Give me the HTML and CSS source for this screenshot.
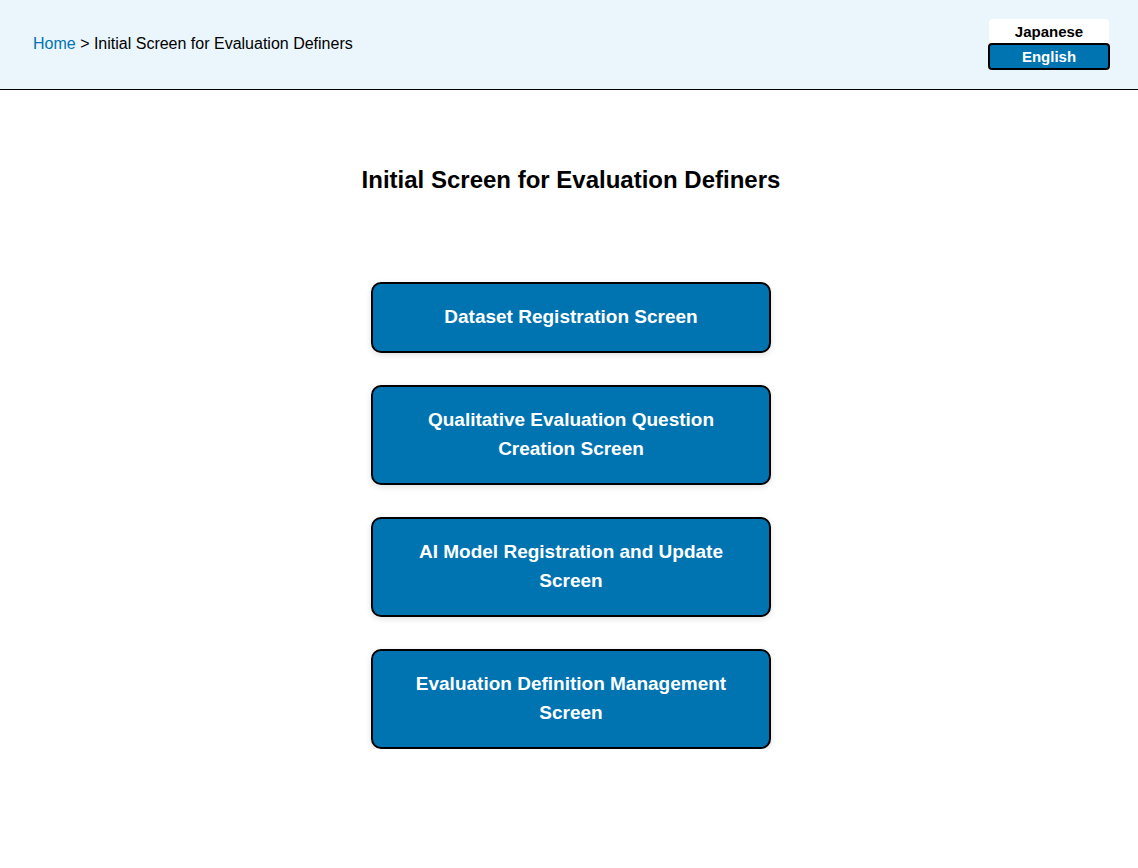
FILE: index.html
```html
<!DOCTYPE html>
<html lang="en">
<head>
<meta charset="utf-8">
<title>Initial Screen for Evaluation Definers</title>
<link rel="stylesheet" href="styles.css">
</head>
<body>
<header class="header">
  <nav class="breadcrumb"><a class="crumb-link" href="#">Home</a> &gt; Initial Screen for Evaluation Definers</nav>
  <div class="lang-switch">
    <button class="lang-btn">Japanese</button>
    <button class="lang-btn active">English</button>
  </div>
</header>
<main class="main">
  <h1 class="title">Initial Screen for Evaluation Definers</h1>
  <div class="menu">
    <button class="menu-btn">Dataset Registration Screen</button>
    <button class="menu-btn">Qualitative Evaluation Question Creation Screen</button>
    <button class="menu-btn">AI Model Registration and Update Screen</button>
    <button class="menu-btn">Evaluation Definition Management Screen</button>
  </div>
</main>
</body>
</html>
```
FILE: styles.css
```css
* { box-sizing: border-box; }
html, body { margin: 0; padding: 0; }
body {
  font-family: "Liberation Sans", Arial, sans-serif;
  color: #000;
  background: #fff;
}
.header {
  height: 90px;
  background: #eaf5fc;
  border-bottom: 1px solid #000;
  display: flex;
  align-items: center;
  justify-content: space-between;
  padding: 0 29px 0 33px;
}
.breadcrumb {
  font-size: 16px;
  margin-top: -1px;
}
.crumb-link {
  color: #0073b1;
  text-decoration: none;
}
.lang-switch {
  width: 120px;
  display: flex;
  flex-direction: column;
  background: #fff;
  border-radius: 4px;
  margin-top: -1px;
}
.lang-btn {
  font-family: "Liberation Sans", Arial, sans-serif;
  font-size: 15px;
  font-weight: bold;
  background: transparent;
  color: #000;
  border: none;
  height: 24px;
  padding: 2px 0 0;
  cursor: pointer;
}
.lang-btn.active {
  background: #0073b1;
  color: #fff;
  border: 2px solid #000;
  border-radius: 4px;
  height: 27px;
  padding: 0;
  margin: 0 -1px;
}
.main {
  display: flex;
  flex-direction: column;
  align-items: center;
  padding-left: 4px;
}
.title {
  font-size: 24px;
  font-weight: bold;
  margin: 76px 0 0;
  line-height: 28px;
}
.menu {
  margin-top: 88px;
  display: flex;
  flex-direction: column;
  gap: 32px;
}
.menu-btn {
  width: 400px;
  font-family: "Liberation Sans", Arial, sans-serif;
  font-size: 19px;
  font-weight: bold;
  line-height: 29px;
  color: #fff;
  background: #0073b1;
  border: 2px solid #000;
  border-radius: 10px;
  padding: 18px 40px 20px;
  box-shadow: 0 2px 6px rgba(0,0,0,0.12);
  cursor: pointer;
}
```
